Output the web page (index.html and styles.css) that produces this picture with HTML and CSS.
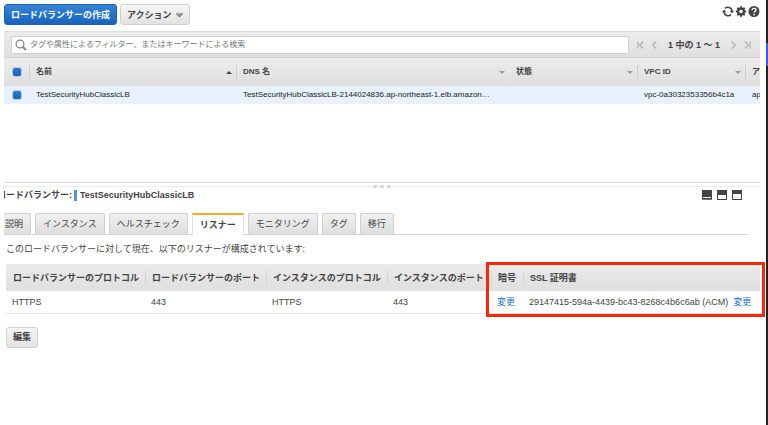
FILE: index.html
```html
<!DOCTYPE html>
<html lang="ja">
<head>
<meta charset="utf-8">
<title>ロードバランサー</title>
<link rel="stylesheet" href="styles.css">
</head>
<body>
<div class="page">
  <main class="console">
    <header class="toolbar">
      <button class="btn btn-primary" type="button">ロードバランサーの作成</button>
      <button class="btn" type="button">アクション
        <svg class="chevron" viewBox="0 0 7 6" aria-hidden="true"><path d="M.6 .8h5.8v1.4L3.5 5.2.6 2.2z" fill="#aaa"/><path d="M.6 1.6l2.9 3 2.9-3" fill="none" stroke="#777" stroke-width="1.1"/></svg>
      </button>
      <div class="tools">
        <button class="icon-btn" type="button" aria-label="更新">
          <svg viewBox="0 0 13 12"><g fill="none" stroke="#444" stroke-width="1.7"><path d="M3.2 2.6A4.7 4.7 0 0 1 11 5.5"/><path d="M9.8 9.4A4.7 4.7 0 0 1 2 6.5"/></g><path d="M8.4 5.2H13l-2.2 3zM0 6.8h4.6L2.2 3.8z" fill="#444"/></svg>
        </button>
        <button class="icon-btn" type="button" aria-label="設定">
          <svg viewBox="0 0 12 12"><circle cx="6" cy="6" r="2.9" fill="none" stroke="#444" stroke-width="2.2"/><path d="M6 .8v2M6 9.2v2M.8 6h2M9.2 6h2M2.3 2.3l1.4 1.4M8.3 8.3l1.4 1.4M2.3 9.7l1.4-1.4M8.3 3.7l1.4-1.4" stroke="#444" stroke-width="2"/></svg>
        </button>
        <button class="icon-btn" type="button" aria-label="ヘルプ">
          <svg viewBox="0 0 12 12"><circle cx="6" cy="6" r="5.5" fill="#444"/><path d="M4.1 4.7C4.1 2.3 8 2.3 8 4.6 8 6 6.1 6 6.1 7.3" fill="none" stroke="#fff" stroke-width="1.4"/><circle cx="6.1" cy="9.1" r=".9" fill="#fff"/></svg>
        </button>
      </div>
    </header>

    <section class="filter">
      <label class="search">
        <svg viewBox="0 0 12 12" aria-hidden="true"><circle cx="5" cy="5" r="3.9" fill="none" stroke="#888" stroke-width="1.3"/><path d="M7.8 7.8l3.2 3.2" stroke="#888" stroke-width="2"/></svg>
        <input type="text" aria-label="フィルター" placeholder="タグや属性によるフィルター、またはキーワードによる検索">
      </label>
      <nav class="pager">
        <button class="page-btn" type="button" aria-label="最初"><svg viewBox="0 0 8 10"><path d="M1 1v8M7 1L3 5l4 4"/></svg></button>
        <button class="page-btn" type="button" aria-label="前へ"><svg viewBox="0 0 8 10"><path d="M6 1L2 5l4 4"/></svg></button>
        <span class="range">1 中の 1 ～ 1</span>
        <button class="page-btn" type="button" aria-label="次へ"><svg viewBox="0 0 8 10"><path d="M2 1l4 4-4 4"/></svg></button>
        <button class="page-btn" type="button" aria-label="最後"><svg viewBox="0 0 8 10"><path d="M7 1v8M1 1l4 4-4 4"/></svg></button>
      </nav>
    </section>

    <table class="list">
      <colgroup><col class="l-check"><col class="l-name"><col><col class="l-state"><col class="l-vpc"><col class="l-zone"></colgroup>
      <thead>
        <tr>
          <th><input class="check" type="checkbox" aria-label="すべて選択"></th>
          <th><div class="head">名前<i class="sort up"></i></div></th>
          <th><div class="head">DNS 名<i class="sort"></i></div></th>
          <th><div class="head plain">状態<i class="sort"></i></div></th>
          <th><div class="head">VPC ID<i class="sort"></i></div></th>
          <th><div class="head">ア</div></th>
        </tr>
      </thead>
      <tbody>
        <tr>
          <td><input class="check" type="checkbox" aria-label="TestSecurityHubClassicLB"></td>
          <td>TestSecurityHubClassicLB</td>
          <td>TestSecurityHubClassicLB-2144024836.ap-northeast-1.elb.amazon…</td>
          <td></td>
          <td>vpc-0a3032353356b4c1a</td>
          <td>ap</td>
        </tr>
      </tbody>
    </table>

    <div class="splitter"><i></i><i></i><i></i></div>

    <section class="detail">
      <div class="detail-head">
        <h2>ロードバランサー:<span class="mark"></span>TestSecurityHubClassicLB</h2>
        <div class="layouts">
          <button class="icon-btn" type="button" aria-label="下"><svg viewBox="0 0 10 10"><path d="M0 0h10v10H0z" fill="#444"/><path d="M1 7h8v1H1z" fill="#eee"/><path d="M0 9h10v1H0z" fill="#777"/></svg></button>
          <button class="icon-btn" type="button" aria-label="中央"><svg viewBox="0 0 10 10"><path d="M0 0h10v10H0z" fill="#444"/><path d="M1 5h8v4H1z" fill="#fff"/></svg></button>
          <button class="icon-btn" type="button" aria-label="上"><svg viewBox="0 0 10 10"><path d="M0 0h10v10H0z" fill="#444"/><path d="M1 4h8v5H1z" fill="#fff"/></svg></button>
        </div>
      </div>

      <nav class="tabs">
        <button class="tab first" type="button">説明</button>
        <button class="tab" type="button">インスタンス</button>
        <button class="tab" type="button">ヘルスチェック</button>
        <button class="tab active" type="button">リスナー</button>
        <button class="tab" type="button">モニタリング</button>
        <button class="tab" type="button">タグ</button>
        <button class="tab" type="button">移行</button>
      </nav>

      <p class="note">このロードバランサーに対して現在、以下のリスナーが構成されています:</p>

      <div class="listeners-wrap">
        <table class="listeners">
          <colgroup><col class="c-proto"><col class="c-port"><col class="c-port"><col class="c-iport"><col class="c-cipher"><col></colgroup>
          <thead>
            <tr>
              <th><div class="head plain">ロードバランサーのプロトコル</div></th>
              <th><div class="head">ロードバランサーのポート</div></th>
              <th><div class="head">インスタンスのプロトコル</div></th>
              <th><div class="head">インスタンスのポート</div></th>
              <th><div class="head">暗号</div></th>
              <th><div class="head">SSL 証明書</div></th>
            </tr>
          </thead>
          <tbody>
            <tr>
              <td>HTTPS</td>
              <td>443</td>
              <td>HTTPS</td>
              <td>443</td>
              <td><a href="#cipher">変更</a></td>
              <td><span class="cert">29147415-594a-4439-bc43-8268c4b6c6ab (ACM)</span><a href="#cert">変更</a></td>
            </tr>
          </tbody>
        </table>
        <div class="callout"></div>
      </div>

      <button class="btn edit" type="button">編集</button>
    </section>
  </main>
  <aside class="edge"><div class="edge-accent"></div></aside>
</div>
</body>
</html>
```
FILE: styles.css
```css
* { box-sizing: border-box; }

body {
  margin: 0;
  background: #fff;
  color: #444;
  font: 9px/12px "Liberation Sans", "Noto Sans CJK JP", sans-serif;
}

button, input { font: inherit; color: inherit; }

table { width: 100%; border-collapse: collapse; table-layout: fixed; }

th, td { padding: 0; text-align: left; white-space: nowrap; }

a { color: #146ec8; text-decoration: none; }

.page { display: flex; min-height: 100vh; }

.console { flex: 1; min-width: 0; margin: 0 6px 0 4px; }

.edge { width: 2px; padding-top: 43px; background: #222; }
.edge-accent { height: 23px; background: #3b5bf5; }

/* Toolbar */
.toolbar { display: flex; gap: 3px; height: 31px; padding-top: 4px; }

.btn {
  display: flex;
  align-items: center;
  gap: 4px;
  height: 21px;
  padding: 0 6px;
  border: 1px solid #d0d0d0;
  border-radius: 3px;
  background: linear-gradient(#f6f6f6, #e2e2e2);
  font-weight: bold;
  white-space: nowrap;
}

.btn-primary {
  border-color: #1d62b4;
  background: linear-gradient(#3583d8, #1864bd);
  color: #fff;
}

.chevron { width: 7px; height: 6px; }

.tools { display: flex; gap: 1px; margin: 1px 0 0 auto; }
.icon-btn { display: flex; padding: 0; border: 0; background: none; }
.icon-btn svg { width: 12px; height: 13px; }

/* Filter bar */
.filter {
  display: flex;
  align-items: center;
  gap: 8px;
  height: 27px;
  padding: 0 9px 0 7px;
  border-top: 1px solid #ddd;
  border-bottom: 1px solid #d2d2d2;
  background: linear-gradient(#ececec, #dfdfdf);
}

.search {
  display: flex;
  flex: 1;
  align-items: center;
  gap: 3px;
  height: 18px;
  padding-left: 3px;
  border: 1px solid #d0d0d0;
  border-radius: 2px;
  background: #fff;
}
.search svg { width: 12px; height: 12px; }
.search input {
  flex: 1;
  min-width: 0;
  padding: 0;
  border: 0;
  outline: 0;
  background: none;
  font-size: 8px;
}
.search input::placeholder { color: #777; opacity: 1; }

.pager { display: flex; align-items: center; gap: 7px; }
.page-btn { display: flex; padding: 0; border: 0; background: none; }
.page-btn svg {
  width: 7px;
  height: 10px;
  fill: none;
  stroke: #b0b0b0;
  stroke-width: 1.4;
}
.range { padding: 0 3px; font-weight: bold; white-space: nowrap; }

/* Load balancer list */
.list { font-size: 8px; }
.l-check { width: 25px; }
.l-name { width: 207px; }
.l-state { width: 128px; }
.l-vpc { width: 108px; }
.l-zone { width: 15px; }

.list th { height: 28px; background: linear-gradient(#ededed, #dedede); }
.list td { height: 18px; background: #e8f1fd; color: #222; }
.list td + td { padding-left: 7px; }
.list th, .list td { overflow: hidden; }

.head {
  display: flex;
  align-items: center;
  height: 14px;
  padding-left: 6px;
  border-left: 1px solid #cfcfcf;
}
.head.plain { border-left-color: transparent; }

.sort {
  margin: 0 4px 0 auto;
  border: 3px solid transparent;
  border-top: 3px solid #999;
  border-bottom: 0;
}
.sort.up { border-top: 0; border-bottom: 3px solid #444; }

.check {
  display: block;
  width: 10px;
  height: 10px;
  margin: 0 0 0 8px;
  appearance: none;
  border: 1px solid #b9cbe0;
  border-radius: 3px;
  background: linear-gradient(#2d7cd0, #1762b8);
}

/* Divider between the panes */
.splitter {
  display: flex;
  justify-content: center;
  gap: 3px;
  height: 5px;
  margin-top: 78px;
  padding-top: 2px;
  border-top: 1px solid #ddd;
  border-bottom: 1px solid #eee;
}
.splitter i { width: 4px; height: 3px; border-radius: 2px; background: #d5d5d5; }

/* Detail pane */
.detail-head {
  display: flex;
  align-items: center;
  justify-content: space-between;
  height: 16px;
  padding-right: 18px;
  overflow: hidden;
}
.detail-head h2 {
  display: flex;
  align-items: center;
  margin: 0 0 0 -7px;
  font-size: 9px;
  line-height: 12px;
}
.mark { width: 3px; height: 11px; margin: 0 3px 0 2px; background: #5096d8; }

.layouts { display: flex; gap: 5px; }
.layouts svg { width: 10px; height: 10px; }

.tabs {
  display: flex;
  align-items: flex-end;
  gap: 4px;
  height: 32px;
  margin-right: 12px;
  border-bottom: 1px solid #d5d5d5;
}
.tab {
  height: 21px;
  padding: 0 7px;
  border: 1px solid #d0d0d0;
  border-bottom: 0;
  border-radius: 2px 2px 0 0;
  background: linear-gradient(#f0f0f0, #dedede);
  white-space: nowrap;
}
.tab.first { padding-left: 1px; border-left: 0; }
.tab.active {
  height: 22px;
  margin-bottom: -1px;
  border-color: #e0e0e0;
  border-top: 2px solid #f9a825;
  border-radius: 0;
  background: #fff;
  font-weight: bold;
}

.note { margin: 8px 0 9px 2px; }

.listeners-wrap { position: relative; margin-left: 2px; }
.listeners { border-bottom: 1px solid #e8e8e8; }
.listeners th { height: 27px; background: linear-gradient(#ebebeb, #dfdfdf); }
.listeners td { height: 22px; padding-left: 6px; }
.listeners .head { border-left-color: #d6d6d6; }
.listeners .head.plain { border-left-color: transparent; }
.c-proto { width: 139px; }
.c-port { width: 121px; }
.c-iport { width: 104px; }
.c-cipher { width: 32px; }
.cert { margin-right: 5px; }

.callout {
  position: absolute;
  inset: -2px -5px -3px 480px;
  border: 3px solid #fb2507;
}

.edit { margin: 13px 0 0 2px; }
```
